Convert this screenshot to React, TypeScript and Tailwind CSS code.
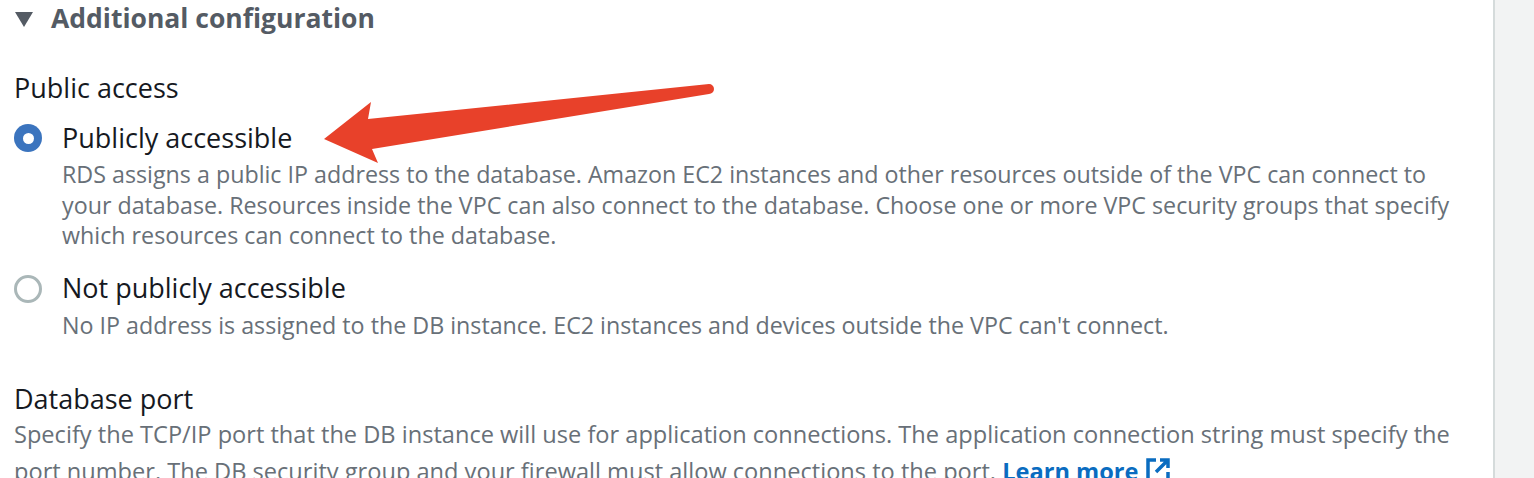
import React from "react";

const font = { fontFamily: '"Open Sans", "Noto Sans", Arial, sans-serif' };

const Radio = ({ checked }: { checked: boolean }) =>
  checked ? (
    <span className="flex h-[28px] w-[28px] shrink-0 items-center justify-center rounded-full bg-[#3b74be]">
      <span className="h-[11px] w-[11px] rounded-full bg-white" />
    </span>
  ) : (
    <span className="h-[28px] w-[28px] shrink-0 rounded-full border-[3px] border-[#aab7b8] bg-white" />
  );

interface OptionProps {
  checked: boolean;
  label: string;
  lines: string[];
}

const Option: React.FC<OptionProps> = ({ checked, label, lines }) => (
  <div className="flex flex-col">
    <div className="flex h-[34px] items-center gap-[20px]">
      <Radio checked={checked} />
      <span className="whitespace-nowrap text-[27px] text-[#16191f]">{label}</span>
    </div>
    <div className="mt-[4px] pl-[48px] text-[23.25px] leading-[30.5px] text-[#687078]">
      {lines.map((line) => (
        <div key={line} className="whitespace-nowrap">
          {line}
        </div>
      ))}
    </div>
  </div>
);

const ExternalIcon = () => (
  <svg width="26" height="26" viewBox="0 0 26 26" className="inline-block align-[-3px]">
    <path d="M11 3H3v20h20v-8" fill="none" stroke="#0a6cc0" strokeWidth="3.5" />
    <path d="M15 3h8v8M23 3L11 15" fill="none" stroke="#0a6cc0" strokeWidth="3.5" />
  </svg>
);

export default function App() {
  return (
    <div className="flex h-[478px] w-[1534px] overflow-hidden bg-[#f2f3f3]" style={font}>
      <div className="relative flex w-[1495px] flex-col border-r-2 border-[#d5dbdb] bg-white pl-[14px]">
        <div className="mt-[1px] flex h-[36px] items-center gap-[17px]">
          <svg width="20" height="16" viewBox="0 0 20 16">
            <path d="M1 1h18l-9 15z" fill="#545b64" strokeLinejoin="round" />
          </svg>
          <span className="whitespace-nowrap text-[26.5px] font-bold text-[#545b64]">
            Additional configuration
          </span>
        </div>

        <div className="mt-[34px] h-[34px] text-[27px] leading-[34px] text-[#16191f]">Public access</div>

        <div className="mt-[16px]">
          <Option
            checked
            label="Publicly accessible"
            lines={[
              "RDS assigns a public IP address to the database. Amazon EC2 instances and other resources outside of the VPC can connect to",
              "your database. Resources inside the VPC can also connect to the database. Choose one or more VPC security groups that specify",
              "which resources can connect to the database.",
            ]}
          />
        </div>

        <div className="mt-[21px]">
          <Option
            checked={false}
            label="Not publicly accessible"
            lines={["No IP address is assigned to the DB instance. EC2 instances and devices outside the VPC can't connect."]}
          />
        </div>

        <div className="mt-[42px] h-[34px] text-[27px] leading-[34px] text-[#16191f]">Database port</div>
        <div className="mt-[3px] text-[23.6px] text-[#687078]">
          <div className="h-[30px] whitespace-nowrap leading-[30px]">
            Specify the TCP/IP port that the DB instance will use for application connections. The application connection string must specify the
          </div>
          <div className="h-[44px] whitespace-nowrap leading-[44px]">
            port number. The DB security group and your firewall must allow connections to the port.{" "}
            <span className="font-bold text-[#0a6cc0]">Learn more</span> <ExternalIcon />
          </div>
        </div>

        <svg className="pointer-events-none absolute left-0 top-0" width="1495" height="478">
          <path
            d="M324 139 L371 102 L368 119 L709 84 A5 5 0 0 1 709 94 L372 149 L378 163 Z"
            fill="#e8412a"
            strokeLinejoin="round"
          />
        </svg>
      </div>
    </div>
  );
}
